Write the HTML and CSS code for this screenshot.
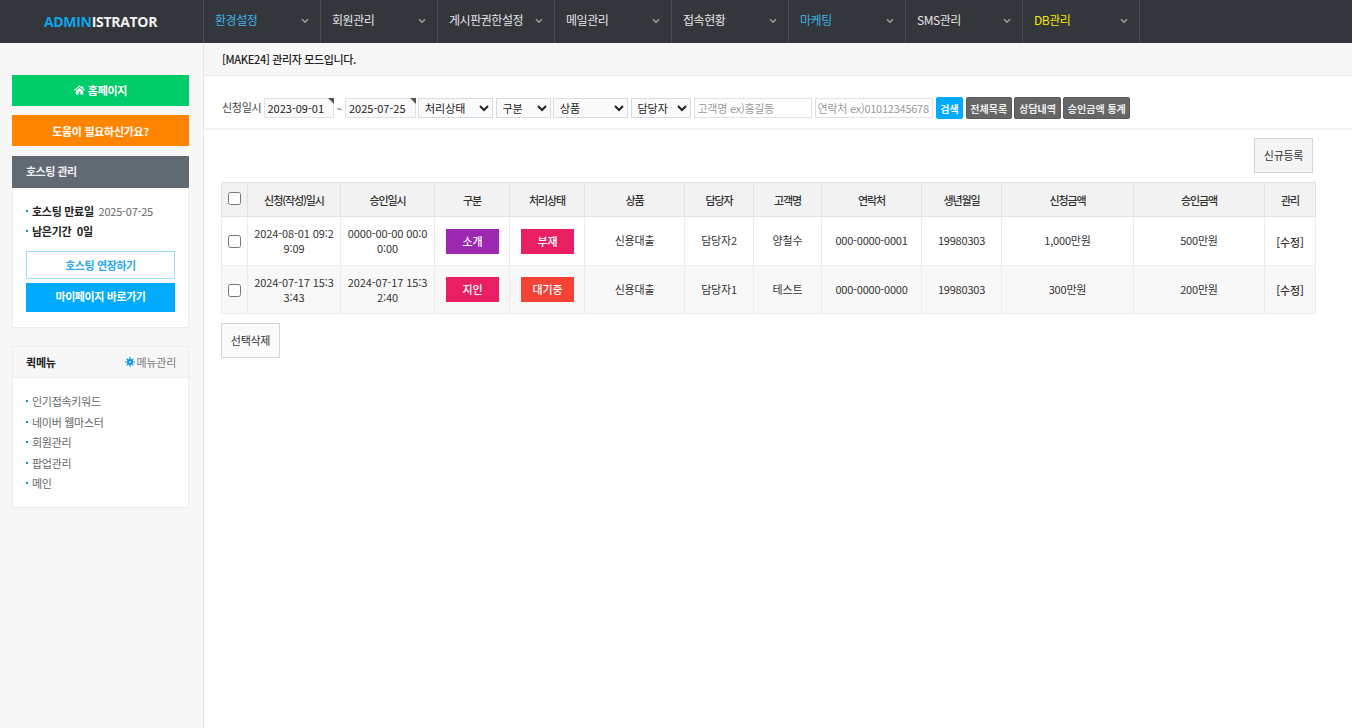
FILE: index.html
```html
<!DOCTYPE html>
<html lang="ko">
<head>
    <meta charset="UTF-8">
    <title>ADMINISTRATOR</title>
    <link rel="stylesheet" href="styles.css">
</head>
<body>
    <header class="topbar">
        <h1 class="logo"><span>ADMIN</span>ISTRATOR</h1>
        <nav class="gnb">
            <a class="gnb-item blue">환경설정<svg class="chev" viewBox="0 0 8 6"><path d="M1 1.2 4 4.2 7 1.2" /></svg></a>
            <a class="gnb-item">회원관리<svg class="chev" viewBox="0 0 8 6"><path d="M1 1.2 4 4.2 7 1.2" /></svg></a>
            <a class="gnb-item">게시판권한설정<svg class="chev" viewBox="0 0 8 6"><path d="M1 1.2 4 4.2 7 1.2" /></svg></a>
            <a class="gnb-item">메일관리<svg class="chev" viewBox="0 0 8 6"><path d="M1 1.2 4 4.2 7 1.2" /></svg></a>
            <a class="gnb-item">접속현황<svg class="chev" viewBox="0 0 8 6"><path d="M1 1.2 4 4.2 7 1.2" /></svg></a>
            <a class="gnb-item blue">마케팅<svg class="chev" viewBox="0 0 8 6"><path d="M1 1.2 4 4.2 7 1.2" /></svg></a>
            <a class="gnb-item">SMS관리<svg class="chev" viewBox="0 0 8 6"><path d="M1 1.2 4 4.2 7 1.2" /></svg></a>
            <a class="gnb-item yellow">DB관리<svg class="chev" viewBox="0 0 8 6"><path d="M1 1.2 4 4.2 7 1.2" /></svg></a>
        </nav>
    </header>

    <div class="wrap">
        <aside class="side">
            <a class="side-btn green">
                <svg class="home" viewBox="0 0 12 10"><path d="M6 0 0 5 .7 5.8 6 1.5 11.3 5.8 12 5 10 3.3V.8H8.6V2.1ZM2 6V10H5V7H7V10H10V6L6 2.7Z" /></svg>
                홈페이지
            </a>
            <a class="side-btn orange">도움이 필요하신가요?</a>

            <section class="hosting">
                <h2>호스팅 관리</h2>
                <div class="hosting-body">
                    <p class="dot-line"><b>호스팅 만료일</b> <span>2025-07-25</span></p>
                    <p class="dot-line"><b>남은기간 &nbsp;0일</b></p>
                    <a class="host-btn line">호스팅 연장하기</a>
                    <a class="host-btn fill">마이페이지 바로가기</a>
                </div>
            </section>

            <section class="quick">
                <div class="quick-head">
                    <h2>퀵메뉴</h2>
                    <a><svg class="gear" viewBox="0 0 10 10"><path d="M5 0V10M0 5H10M1.6 1.6 8.4 8.4M8.4 1.6 1.6 8.4" stroke-width="1.2" /><circle cx="5" cy="5" r="2.6" fill="#0a9be8" stroke-width="1" /><circle cx="5" cy="5" r="1" fill="#bfe6fb" stroke="none" /></svg> 메뉴관리</a>
                </div>
                <ul>
                    <li>인기접속키워드</li>
                    <li>네이버 웹마스터</li>
                    <li>회원관리</li>
                    <li>팝업관리</li>
                    <li>메인</li>
                </ul>
            </section>
        </aside>

        <main class="content">
            <div class="title-bar">[MAKE24] 관리자 모드입니다.</div>

            <form class="search">
                <label>신청일시</label>
                <span class="date"><input type="text" value="2023-09-01"></span>
                <span class="tilde">~</span>
                <span class="date"><input type="text" value="2025-07-25"></span>
                <select class="sel-status"><option>처리상태</option></select>
                <select class="sel-type"><option>구분</option></select>
                <select class="sel-goods"><option>상품</option></select>
                <select class="sel-staff"><option>담당자</option></select>
                <input class="txt-name" type="text" placeholder="고객명 ex)홍길동">
                <input class="txt-tel" type="text" placeholder="연락처 ex)01012345678">
                <a class="s-btn sky">검색</a>
                <a class="s-btn">전체목록</a>
                <a class="s-btn">상담내역</a>
                <a class="s-btn last">승인금액 통계</a>
            </form>

            <div class="list-area">
                <div class="top-actions"><a class="plain-btn new">신규등록</a></div>
                <table class="list">
                    <colgroup>
                        <col class="c1"><col class="c2"><col class="c3"><col class="c4"><col class="c5"><col class="c6"><col class="c7">
                        <col class="c8"><col class="c9"><col class="c10"><col class="c11"><col class="c12"><col class="c13">
                    </colgroup>
                    <thead>
                        <tr>
                            <th><input type="checkbox" class="chk"></th>
                            <th>신청(작성)일시</th><th>승인일시</th><th>구분</th><th>처리상태</th><th>상품</th><th>담당자</th>
                            <th>고객명</th><th>연락처</th><th>생년월일</th><th>신청금액</th><th>승인금액</th><th>관리</th>
                        </tr>
                    </thead>
                    <tbody>
                        <tr>
                            <td><input type="checkbox" class="chk"></td>
                            <td class="dt">2024-08-01 09:29:09</td>
                            <td class="dt">0000-00-00 00:00:00</td>
                            <td><span class="tag purple">소개</span></td>
                            <td><span class="tag pink">부재</span></td>
                            <td>신용대출</td><td>담당자2</td><td>양철수</td><td>000-0000-0001</td><td>19980303</td>
                            <td>1,000만원</td><td>500만원</td><td><a class="edit">[수정]</a></td>
                        </tr>
                        <tr class="even">
                            <td><input type="checkbox" class="chk"></td>
                            <td class="dt">2024-07-17 15:33:43</td>
                            <td class="dt">2024-07-17 15:32:40</td>
                            <td><span class="tag pink">지인</span></td>
                            <td><span class="tag red">대기중</span></td>
                            <td>신용대출</td><td>담당자1</td><td>테스트</td><td>000-0000-0000</td><td>19980303</td>
                            <td>300만원</td><td>200만원</td><td><a class="edit">[수정]</a></td>
                        </tr>
                    </tbody>
                </table>
                <a class="plain-btn del">선택삭제</a>
            </div>
        </main>
    </div>
</body>
</html>
```

FILE: styles.css
```css
* {
    box-sizing: border-box;
}

html, body {
    height: 100%;
}

body {
    margin: 0;
    font-family: "Noto Sans CJK KR", "Noto Sans", sans-serif;
    font-size: 12px;
    color: #222;
    background: #fff;
    overflow: hidden;
}

a {
    text-decoration: none;
}

h1, h2, p, ul {
    margin: 0;
    padding: 0;
}

/* top */
.topbar {
    display: flex;
    height: 43px;
    background: #33363b;
}

.logo {
    width: 203px;
    padding-right: 2px;
    font-family: "Open Sans", sans-serif;
    font-size: 14px;
    font-weight: 700;
    line-height: 43px;
    text-align: center;
    color: #f2f2f2;
    letter-spacing: -0.3px;
}

.logo span {
    color: #0ea5e9;
}

.gnb {
    display: flex;
    border-left: 1px solid #4a4d52;
}

.gnb-item {
    position: relative;
    width: 117px;
    padding-left: 11px;
    border-right: 1px solid #4a4d52;
    line-height: 40px;
    color: #e4e4e4;
    font-size: 12px;
    letter-spacing: -0.45px;
}

.gnb-item.blue {
    color: #3db5e6;
}

.gnb-item.yellow {
    color: #f2ea00;
}

.chev {
    position: absolute;
    right: 11px;
    top: 18px;
    width: 8px;
    height: 6px;
    fill: none;
    stroke: #9a9ca0;
    stroke-width: 1.6;
}

/* side */
.wrap {
    display: flex;
    height: 685px;
}

.side {
    width: 204px;
    flex: none;
    padding: 32px 14px 0 12px;
    background: #f7f7f7;
    border-right: 1px solid #e6e6e6;
}

.side-btn {
    display: flex;
    align-items: center;
    justify-content: center;
    gap: 3px;
    width: 177px;
    height: 31px;
    margin-bottom: 9px;
    font-size: 11px;
    font-weight: 700;
    letter-spacing: -0.3px;
    color: #fff;
}

.side-btn.orange {
    background: #ff8400;
    margin-bottom: 10px;
}

.side-btn.green {
    padding-bottom: 1px;
    background: #00cc69;
}

.home {
    width: 11px;
    height: 10px;
    fill: #fff;
}

.hosting {
    width: 177px;
    margin-bottom: 18px;
    background: #fff;
    border: 1px solid #ececec;
    border-top: 0;
}

.hosting h2 {
    height: 32px;
    margin: 0 -1px;
    padding-left: 14px;
    background: #616973;
    font-size: 11px;
    letter-spacing: -0.5px;
    line-height: 31px;
    color: #f0f0f0;
}

.hosting-body {
    padding: 13px 13px 15px;
    font-size: 11px;
}

.dot-line {
    position: relative;
    height: 20px;
    padding-left: 6px;
    line-height: 20px;
    letter-spacing: -0.3px;
}

.dot-line span {
    margin-left: 2px;
    color: #666;
    letter-spacing: -0.2px;
}

.dot-line::before,
.quick li::before {
    content: "";
    position: absolute;
    left: 0;
    top: 9px;
    width: 2px;
    height: 2px;
    background: #0d8fc4;
}

.host-btn {
    display: block;
    height: 28px;
    font-weight: 700;
    letter-spacing: -0.4px;
    line-height: 27px;
    text-align: center;
}

.host-btn.line {
    margin-top: 10px;
    margin-bottom: 4px;
    color: #2aa8ee;
    background: #fff;
    border: 1px solid #9adfff;
}

.host-btn.fill {
    height: 29px;
    color: #fff;
    background: #00aaff;
}

.quick {
    width: 177px;
    background: #fff;
    border: 1px solid #ececec;
}

.quick-head {
    display: flex;
    align-items: center;
    justify-content: space-between;
    height: 31px;
    padding: 0 12px 0 13px;
    background: #f7f7f7;
    border-bottom: 1px solid #ececec;
}

.quick-head h2 {
    font-size: 11px;
    letter-spacing: -0.2px;
    color: #222;
}

.quick-head a {
    display: flex;
    align-items: center;
    gap: 2px;
    font-size: 11px;
    letter-spacing: -0.25px;
    color: #777;
}

.gear {
    width: 10px;
    height: 10px;
    fill: none;
    stroke: #0a9be8;
}

.quick ul {
    padding: 13px 13px 13px;
    list-style: none;
}

.quick li {
    position: relative;
    height: 20.6px;
    padding-left: 6px;
    font-size: 11px;
    letter-spacing: -0.3px;
    line-height: 20px;
    color: #666;
}

/* main */
.content {
    flex: 1;
    min-width: 0;
}

.title-bar {
    height: 33px;
    padding-left: 18px;
    background: #f7f7f7;
    border-bottom: 1px solid #ececec;
    font-size: 11px;
    font-weight: 500;
    letter-spacing: -0.35px;
    line-height: 32px;
}

.search {
    display: flex;
    align-items: center;
    gap: 2.5px;
    height: 54px;
    padding: 12px 0 0 18px;
    border-bottom: 2px solid #f2f2f2;
    color: #444;
}

.search label {
    width: 39px;
    font-size: 11px;
    letter-spacing: -0.3px;
    white-space: nowrap;
    margin-bottom: 2px;
}

.search input,
.search select {
    height: 20px;
    padding: 0 3px;
    font-family: inherit;
    font-size: 11px;
    color: #222;
    background: #fff;
    border: 1px solid #dfe3e6;
    border-radius: 0;
}

.search select {
    padding: 0 0 0 2px;
    background: #fafafa;
    border-color: #d3dde3;
}

.date {
    position: relative;
    display: block;
}

.date input {
    display: block;
    width: 70.5px;
    background: #fafafa;
}

.date::after {
    content: "";
    position: absolute;
    right: 0;
    top: 0;
    border-top: 6px solid #55574a;
    border-left: 6px solid transparent;
}

.tilde {
    width: 6px;
    font-size: 10px;
}

.sel-status {
    width: 75px;
}

.sel-type {
    width: 55px;
}

.sel-goods {
    width: 75px;
}

.sel-staff {
    width: 60.5px;
}

.search .txt-name {
    width: 118.5px;
    letter-spacing: -0.25px;
}

.search .txt-tel {
    width: 118px;
    padding: 0 2px;
    letter-spacing: -0.25px;
}

.search input::placeholder {
    color: #999;
}

.s-btn {
    height: 22px;
    padding: 0 3.8px;
    font-size: 10px;
    font-weight: 700;
    line-height: 21px;
    color: #eee;
    background: #666;
    border: 1px solid #5a5a5a;
    border-radius: 2px;
    white-space: nowrap;
}

.s-btn.sky {
    width: 27px;
    margin-left: 1px;
    padding: 0;
    text-align: center;
    color: #fff;
    background: #00aaff;
    border-color: #00aaff;
}

.s-btn.last {
    padding: 0 3.5px;
}

.list-area {
    padding: 8px 36px 0 17px;
}

.top-actions {
    display: flex;
    justify-content: flex-end;
    padding-right: 3px;
    margin-bottom: 9px;
}

.plain-btn {
    display: block;
    width: 59px;
    height: 35px;
    font-size: 11px;
    letter-spacing: -0.3px;
    line-height: 33px;
    text-align: center;
    color: #333;
    background: #fafafa;
    border: 1px solid #d4d4d4;
}

.plain-btn.new {
    background: #f4f4f4;
}

.plain-btn.del {
    margin-top: 9px;
}

.list {
    width: 1094px;
    table-layout: fixed;
    border-collapse: collapse;
}

.c1 { width: 26px; }
.c2 { width: 93px; }
.c3 { width: 94px; }
.c4 { width: 75px; }
.c5 { width: 75px; }
.c6 { width: 100px; }
.c7 { width: 69px; }
.c8 { width: 68px; }
.c9 { width: 100px; }
.c10 { width: 80px; }
.c11 { width: 132px; }
.c12 { width: 131px; }
.c13 { width: 51px; }

.list th,
.list td {
    padding: 0;
    text-align: center;
    border: 1px solid #ececec;
}

.list th {
    height: 34px;
    font-size: 11px;
    font-weight: 500;
    letter-spacing: -1.1px;
    color: #333;
    background: #f2f2f2;
    border-color: #e2e2e2;
}

.list td {
    height: 49px;
    font-size: 11px;
    letter-spacing: -0.2px;
    line-height: 15px;
    color: #333;
    padding-bottom: 1px;
}

.list .even td {
    height: 48px;
    background: #f8f8f8;
}

.list .dt {
    padding: 0 5px;
    letter-spacing: -0.1px;
    word-break: break-all;
}

.chk {
    display: block;
    width: 13px;
    height: 13px;
    margin: 0 auto 2px;
}

.list td .chk {
    margin: 2px auto 0;
}

.tag {
    display: block;
    width: 53px;
    height: 25px;
    margin: 1px 0 0 11px;
    font-weight: 500;
    line-height: 24px;
    color: #fff;
    font-size: 11px;
}

.tag.purple {
    background: #9c27b0;
}

.tag.pink {
    background: #e91e63;
}

.tag.red {
    background: #f44336;
}

.edit {
    display: block;
    margin-top: 3px;
    font-weight: 500;
    color: #333;
}
```
